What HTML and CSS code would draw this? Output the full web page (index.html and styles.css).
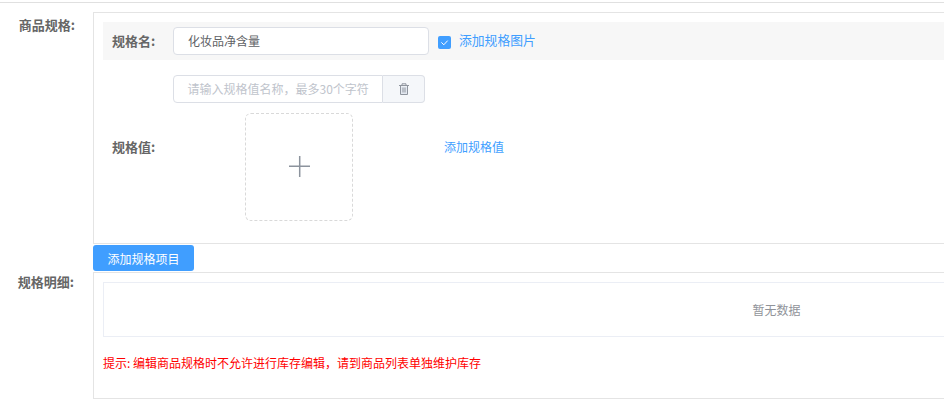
FILE: index.html
```html
<!DOCTYPE html>
<html lang="zh-CN">
<head>
<meta charset="utf-8">
<title>商品规格</title>
<link rel="stylesheet" href="styles.css">
</head>
<body>
<main class="page">
  <section class="form-row">
    <div class="form-label">商品规格:</div>
    <div class="panel spec-panel">
      <div class="spec-name">
        <span class="inner-label">规格名:</span>
        <div class="text-input name-input">化妆品净含量</div>
        <label class="check">
          <span class="check-box">
            <svg viewBox="0 0 13 13" width="13" height="13"><path d="M3.4 6.4l2.4 2.4 3.9-4.2" fill="none" stroke="#fff" stroke-width="1"/></svg>
          </span>
          <span class="link check-text">添加规格图片</span>
        </label>
      </div>
      <div class="value-input">
        <div class="text-input value-field">请输入规格值名称，最多30个字符</div>
        <button class="trash" type="button" aria-label="删除">
          <svg viewBox="0 0 12 12" width="12" height="12"><path d="M3 3.5h6v7.5H3z" fill="#e3e8f0"/><path d="M1 2.5h10M4 2.5V.8h4v1.7M2.5 2.5v9h7v-9M5 4.5v5M7 4.5v5" fill="none" stroke="#8f959e" stroke-width="1"/></svg>
        </button>
      </div>
      <div class="value-row">
        <span class="inner-label value-label">规格值:</span>
        <div class="upload">
          <svg viewBox="0 0 21 21" width="21" height="21"><path d="M0 10.2h21M10.7 0v21" fill="none" stroke="#8c939d" stroke-width="1.5"/></svg>
        </div>
        <a class="link add-value">添加规格值</a>
      </div>
    </div>
  </section>
  <button class="add-item" type="button">添加规格项目</button>
  <section class="form-row">
    <div class="form-label detail-label">规格明细:</div>
    <div class="panel detail-panel">
      <div class="empty-table"><span>暂无数据</span></div>
      <p class="tip">提示: 编辑商品规格时不允许进行库存编辑，请到商品列表单独维护库存</p>
    </div>
  </section>
</main>
</body>
</html>
```
FILE: styles.css
```css
* { box-sizing: border-box; }
html, body { margin: 0; padding: 0; background: #fff; }
body {
  font-family: "Noto Sans CJK SC", "Liberation Sans", sans-serif;
  font-size: 12px;
  color: #606266;
  height: 411px;
  width: 944px;
  overflow: hidden;
}
.page {
  width: 1460px;
  margin-top: 2px;
  padding-top: 9px;
  border-top: 1px solid #e0e0e0;
}
.form-row { display: flex; align-items: flex-start; }
.form-label {
  flex: 0 0 93px;
  padding: 4px 18px 0 0;
  font-size: 13px;
  line-height: 18px;
  font-weight: 700;
  text-align: right;
  color: #666;
}
.detail-label { padding: 1px 19px 0 0; }
.panel {
  flex: 1;
  border: 1px solid #e4e4e4;
  padding: 9px;
}
.spec-panel { height: 232px; }
.detail-panel { height: 127px; }
.spec-name {
  display: flex;
  align-items: center;
  height: 38px;
  padding-left: 9px;
  background: #f7f7f7;
}
.inner-label {
  font-size: 13px;
  font-weight: 700;
  line-height: 18px;
  color: #666;
}
.spec-name .inner-label { width: 61px; }
.text-input {
  height: 28px;
  line-height: 26px;
  padding-left: 14px;
  border: 1px solid #dcdfe6;
  background: #fff;
}
.name-input { width: 256px; border-radius: 4px; }
.check { display: flex; align-items: center; margin-left: 9px; }
.check-box {
  display: block;
  width: 13px;
  height: 13px;
  margin-top: 2px;
  border-radius: 2px;
  background: #409eff;
}
.check-box svg { display: block; }
.link { color: #409eff; }
.check-text { margin: 0 0 2px 8px; font-size: 12.8px; line-height: 18px; }
.value-input { display: flex; margin: 15px 0 0 70px; }
.value-field {
  width: 210px;
  padding-left: 13.5px;
  color: #c0c4cc;
  border-radius: 4px 0 0 4px;
  white-space: nowrap;
}
.trash {
  display: flex;
  align-items: center;
  justify-content: center;
  width: 42px;
  height: 28px;
  padding: 0 0 1px;
  border: 1px solid #dcdfe6;
  border-left: 0;
  border-radius: 0 4px 4px 0;
  background: #f5f7fa;
}
.value-row { display: flex; align-items: flex-start; margin-top: 10px; padding-left: 9px; }
.value-label { width: 133px; margin-top: 25px; }
.upload {
  display: flex;
  align-items: center;
  justify-content: center;
  width: 108px;
  height: 108px;
  padding-bottom: 1px;
  border: 1px dashed #d9d9d9;
  border-radius: 6px;
}
.add-value { margin: 25px 0 0 91px; line-height: 18px; }
.add-item {
  display: block;
  width: 101px;
  height: 26px;
  margin: 1px 0 1px 93px;
  padding: 0;
  border: 0;
  border-radius: 3px;
  background: #409eff;
  color: #fff;
  font: inherit;
}
.empty-table {
  display: flex;
  align-items: center;
  justify-content: center;
  height: 55px;
  border: 1px solid #ebeef5;
  color: #909399;
}
.tip { margin: 17px 0 0; color: #f00; line-height: 17px; }
```
